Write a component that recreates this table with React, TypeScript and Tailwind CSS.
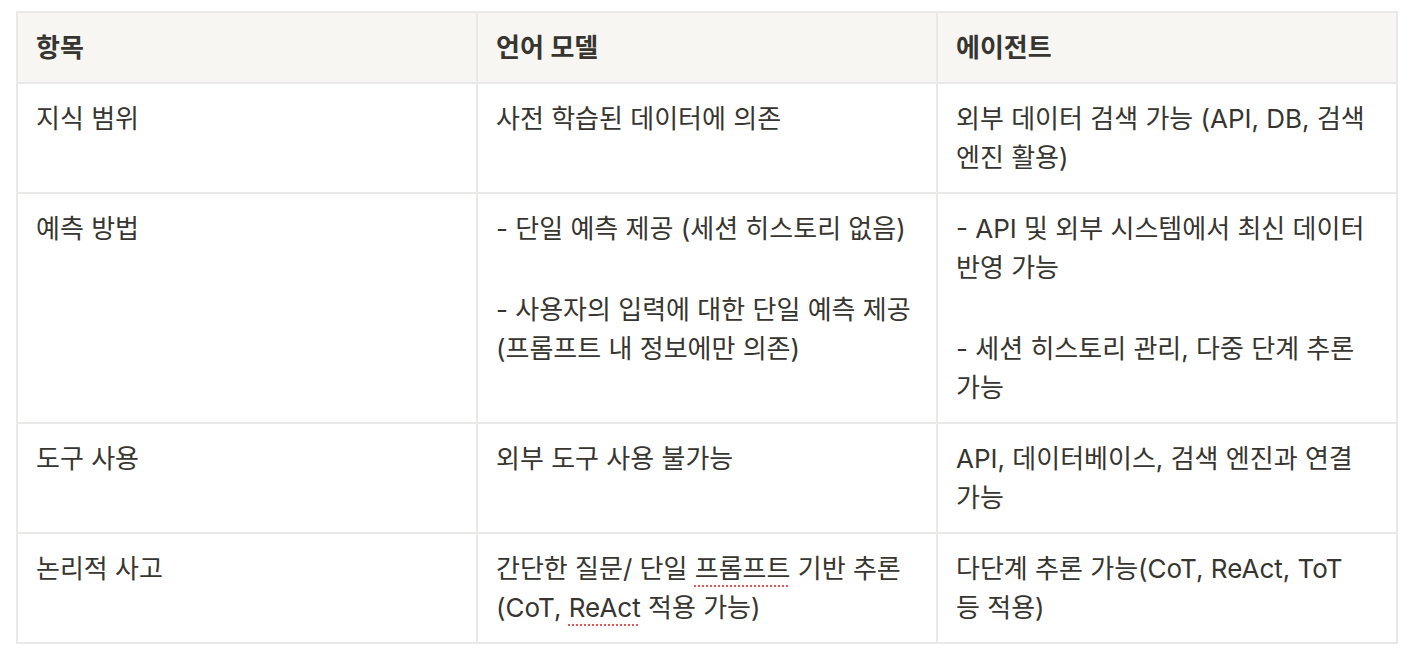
import React from "react";

const font = { fontFamily: 'Inter, "Noto Sans CJK KR", sans-serif' };

type Cell = React.ReactNode;

const Blank = () => <div className="h-[42px]" />;

const Spell = ({ children }: { children: React.ReactNode }) => (
  <span className="underline decoration-dotted decoration-[#eb5757] decoration-2 underline-offset-[7px]">
    {children}
  </span>
);

const header: Cell[] = ["항목", "언어 모델", "에이전트"];

const rows: Cell[][] = [
  ["지식 범위", "사전 학습된 데이터에 의존", "외부 데이터 검색 가능 (API, DB, 검색 엔진 활용)"],
  [
    "예측 방법",
    <>
      <div>- 단일 예측 제공 (세션 히스토리 없음)</div>
      <Blank />
      <div>- 사용자의 입력에 대한 단일 예측 제공 (프롬프트 내 정보에만 의존)</div>
    </>,
    <>
      <div>- API 및 외부 시스템에서 최신 데이터 반영 가능</div>
      <Blank />
      <div>- 세션 히스토리 관리, 다중 단계 추론 가능</div>
    </>,
  ],
  ["도구 사용", "외부 도구 사용 불가능", "API, 데이터베이스, 검색 엔진과 연결 가능"],
  [
    "논리적 사고",
    <>
      간단한 질문/ 단일 <Spell>프롬프트</Spell> 기반 추론 (CoT, <Spell>ReAct</Spell> 적용 가능)
    </>,
    <>
      다단계 추론 가능(CoT, ReAct, ToT <span className="whitespace-nowrap">등 적용)</span>
    </>,
  ],
];

export default function App() {
  return (
    <div className="min-h-[664px] bg-white pl-[16px] pt-[11px]" style={font}>
      <div className="grid w-[1382px] grid-cols-3 border-l-2 border-t-2 border-[#e9e9e7] text-[26px] leading-[39px] text-[#37352f] break-keep">
        {header.map((h, i) => (
          <div
            key={i}
            className="border-b-2 border-r-2 border-[#e9e9e7] bg-[#f7f6f3] px-[18px] py-[15px] font-semibold"
          >
            {h}
          </div>
        ))}
        {rows.map((r, ri) =>
          r.map((c, ci) => (
            <div
              key={`${ri}-${ci}`}
              className="border-b-2 border-r-2 border-[#e9e9e7] px-[18px] py-[15px]"
            >
              {c}
            </div>
          ))
        )}
      </div>
    </div>
  );
}
